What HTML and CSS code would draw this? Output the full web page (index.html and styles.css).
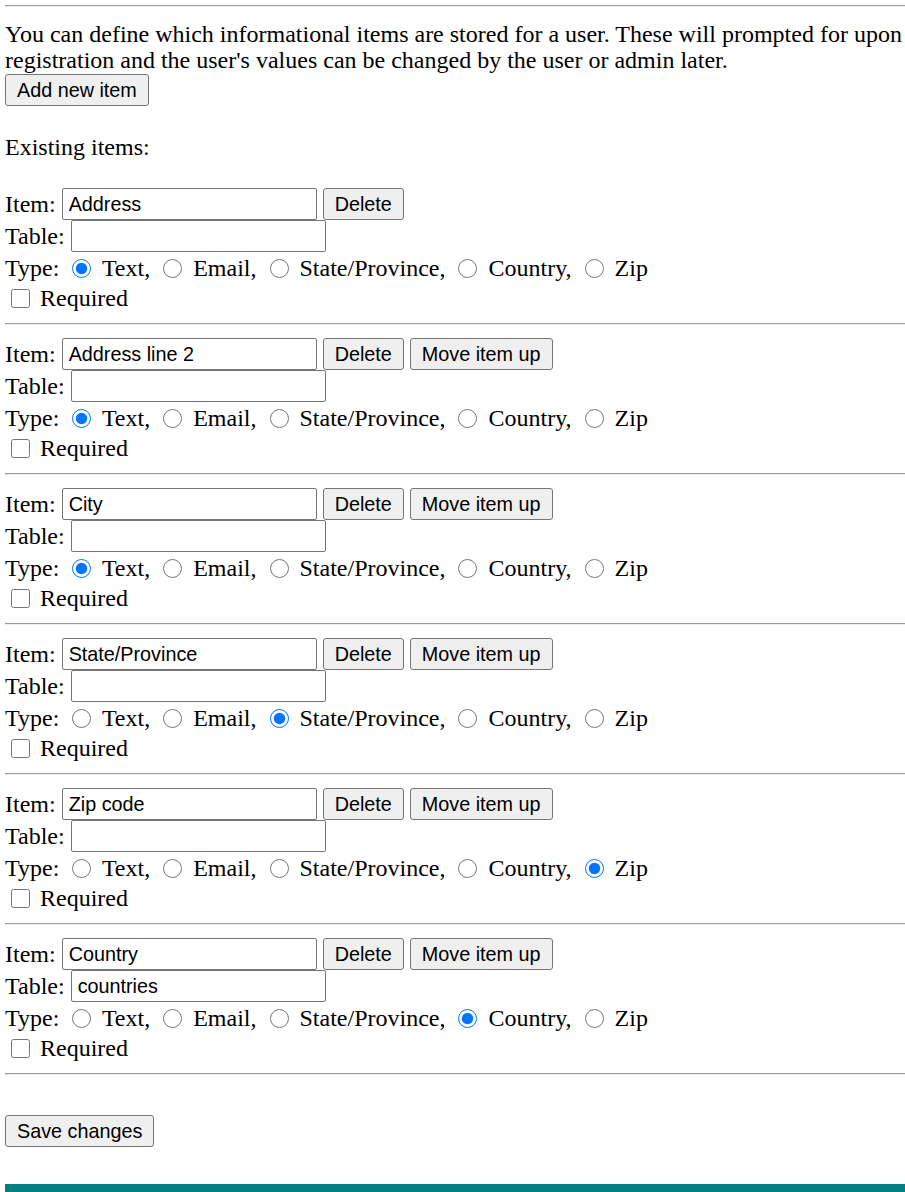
FILE: index.html
```html
<!DOCTYPE html>
<html>
<head>
<meta charset="utf-8">
<link rel="stylesheet" href="styles.css">
</head>
<body>
<hr class="rule top-rule">
<p class="intro">You can define which informational items are stored for a user. These will prompted for upon registration and the user's values can be changed by the user or admin later.</p>
<div class="btn-line"><button class="btn">Add new item</button></div>
<p class="existing">Existing items:</p>

<div class="item">
  <div class="row row-item"><span>Item:</span><input class="field" type="text" value="Address"><button class="btn">Delete</button></div>
  <div class="row row-table"><span>Table:</span><input class="field" type="text" value=""></div>
  <div class="row row-type">Type: <input type="radio" name="t1" class="radio" checked> Text, <input type="radio" name="t1" class="radio"> Email, <input type="radio" name="t1" class="radio"> State/Province, <input type="radio" name="t1" class="radio"> Country, <input type="radio" name="t1" class="radio"> Zip</div>
  <div class="row row-req"><input type="checkbox" class="check"> Required</div>
</div>
<hr class="rule">

<div class="item">
  <div class="row row-item"><span>Item:</span><input class="field" type="text" value="Address line 2"><button class="btn">Delete</button><button class="btn">Move item up</button></div>
  <div class="row row-table"><span>Table:</span><input class="field" type="text" value=""></div>
  <div class="row row-type">Type: <input type="radio" name="t2" class="radio" checked> Text, <input type="radio" name="t2" class="radio"> Email, <input type="radio" name="t2" class="radio"> State/Province, <input type="radio" name="t2" class="radio"> Country, <input type="radio" name="t2" class="radio"> Zip</div>
  <div class="row row-req"><input type="checkbox" class="check"> Required</div>
</div>
<hr class="rule">

<div class="item">
  <div class="row row-item"><span>Item:</span><input class="field" type="text" value="City"><button class="btn">Delete</button><button class="btn">Move item up</button></div>
  <div class="row row-table"><span>Table:</span><input class="field" type="text" value=""></div>
  <div class="row row-type">Type: <input type="radio" name="t3" class="radio" checked> Text, <input type="radio" name="t3" class="radio"> Email, <input type="radio" name="t3" class="radio"> State/Province, <input type="radio" name="t3" class="radio"> Country, <input type="radio" name="t3" class="radio"> Zip</div>
  <div class="row row-req"><input type="checkbox" class="check"> Required</div>
</div>
<hr class="rule">

<div class="item">
  <div class="row row-item"><span>Item:</span><input class="field" type="text" value="State/Province"><button class="btn">Delete</button><button class="btn">Move item up</button></div>
  <div class="row row-table"><span>Table:</span><input class="field" type="text" value=""></div>
  <div class="row row-type">Type: <input type="radio" name="t4" class="radio"> Text, <input type="radio" name="t4" class="radio"> Email, <input type="radio" name="t4" class="radio" checked> State/Province, <input type="radio" name="t4" class="radio"> Country, <input type="radio" name="t4" class="radio"> Zip</div>
  <div class="row row-req"><input type="checkbox" class="check"> Required</div>
</div>
<hr class="rule">

<div class="item">
  <div class="row row-item"><span>Item:</span><input class="field" type="text" value="Zip code"><button class="btn">Delete</button><button class="btn">Move item up</button></div>
  <div class="row row-table"><span>Table:</span><input class="field" type="text" value=""></div>
  <div class="row row-type">Type: <input type="radio" name="t5" class="radio"> Text, <input type="radio" name="t5" class="radio"> Email, <input type="radio" name="t5" class="radio"> State/Province, <input type="radio" name="t5" class="radio"> Country, <input type="radio" name="t5" class="radio" checked> Zip</div>
  <div class="row row-req"><input type="checkbox" class="check"> Required</div>
</div>
<hr class="rule">

<div class="item">
  <div class="row row-item"><span>Item:</span><input class="field" type="text" value="Country"><button class="btn">Delete</button><button class="btn">Move item up</button></div>
  <div class="row row-table"><span>Table:</span><input class="field" type="text" value="countries"></div>
  <div class="row row-type">Type: <input type="radio" name="t6" class="radio"> Text, <input type="radio" name="t6" class="radio"> Email, <input type="radio" name="t6" class="radio"> State/Province, <input type="radio" name="t6" class="radio" checked> Country, <input type="radio" name="t6" class="radio"> Zip</div>
  <div class="row row-req"><input type="checkbox" class="check"> Required</div>
</div>
<hr class="rule">

<div class="save-line"><button class="btn">Save changes</button></div>
<div class="footer-bar"></div>
</body>
</html>
```

FILE: styles.css
```css
html, body {
  margin: 0;
  padding: 0;
  background: #fff;
}
body {
  padding-left: 5px;
  width: 900px;
  font-family: "Liberation Serif", "Times New Roman", serif;
  font-size: 24px;
  line-height: 26px;
  color: #000;
}
.rule {
  margin: 0;
  height: 0;
  border: 0;
  border-top: 1px solid #9a9a9a;
  border-bottom: 1px solid #eeeeee;
}
.top-rule {
  margin-top: 5px;
}
.intro {
  margin: 14px 0 0 0;
}
.btn-line {
  margin-top: 1px;
  height: 32px;
  display: flex;
}
.btn {
  height: 32px;
  box-sizing: border-box;
  padding: 0 11px;
  font-family: "Liberation Sans", Arial, sans-serif;
  font-size: 19.8px;
  color: #000;
  background: #efefef;
  border: 1px solid #767676;
  border-radius: 3px;
  margin: 0;
}
.existing {
  margin: 28px 0 28px 0;
}
.item {
  display: flex;
  flex-direction: column;
}
.row {
  display: flex;
  align-items: center;
}
.row-item {
  height: 32px;
  gap: 6px;
}
.row-table {
  height: 32px;
  gap: 6px;
}
.field {
  box-sizing: border-box;
  width: 255px;
  height: 32px;
  margin: 0;
  padding: 0 6px;
  font-family: "Liberation Sans", Arial, sans-serif;
  font-size: 19.8px;
  color: #000;
  background: #fff;
  border: 1px solid #767676;
  border-radius: 2px;
}
.row-type {
  display: block;
  height: 31px;
  line-height: 33px;
  white-space: nowrap;
}
.row-req {
  display: block;
  height: 30px;
  line-height: 30px;
}
.radio {
  width: 19px;
  height: 19px;
  margin: 0 5px 0 7px;
  vertical-align: -2px;
}
.check {
  width: 19px;
  height: 19px;
  margin: 0 4px 0 6px;
  vertical-align: -2px;
}
.item + .rule {
  margin-top: 10px;
  margin-bottom: 13px;
}
.item + .rule:last-of-type {
  margin-bottom: 0;
}
.save-line {
  margin-top: 40px;
  display: flex;
}
.footer-bar {
  margin-top: 37px;
  height: 10px;
  background: #008080;
}
```
